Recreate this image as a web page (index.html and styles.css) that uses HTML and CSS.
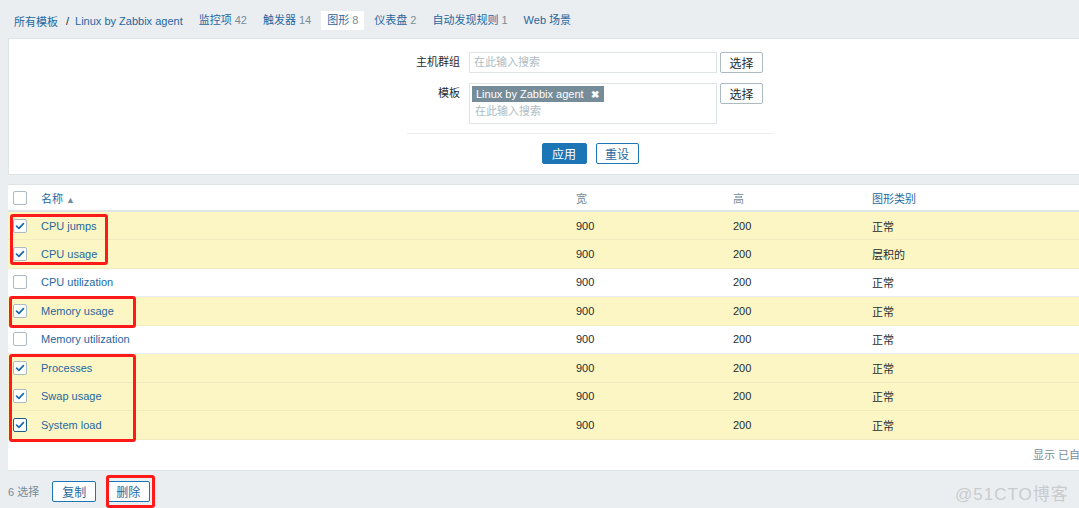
FILE: index.html
```html
<!DOCTYPE html>
<html lang="zh">
<head>
<meta charset="utf-8">
<title>图形</title>
<link rel="stylesheet" href="styles.css">
</head>
<body>
<div class="page">
  <nav class="nav">
    <div class="crumbs"><a class="link">所有模板</a><span class="sep">/</span><a class="link">Linux by Zabbix agent</a></div>
    <ul class="tabs">
      <li class="tab"><a class="link">监控项</a><span class="cnt">42</span></li>
      <li class="tab"><a class="link">触发器</a><span class="cnt">14</span></li>
      <li class="tab active"><a class="link">图形</a><span class="cnt">8</span></li>
      <li class="tab"><a class="link">仪表盘</a><span class="cnt">2</span></li>
      <li class="tab"><a class="link">自动发现规则</a><span class="cnt">1</span></li>
      <li class="tab"><a class="link">Web 场景</a></li>
    </ul>
  </nav>

  <section class="filter">
    <div class="filter-form">
      <div class="fgrid">
        <label class="flabel">主机群组</label>
        <div class="finput"><span class="ph">在此输入搜索</span></div>
        <button class="btn">选择</button>
        <label class="flabel">模板</label>
        <div class="finput multi"><span class="tag">Linux by Zabbix agent<b class="x">✖</b></span><span class="ph">在此输入搜索</span></div>
        <button class="btn">选择</button>
      </div>
      <div class="factions">
        <button class="btn primary">应用</button>
        <button class="btn alt">重设</button>
      </div>
    </div>
  </section>

  <section class="list">
    <table class="tbl">
      <colgroup>
        <col class="c-chk"><col class="c-name"><col class="c-w"><col class="c-h"><col>
      </colgroup>
      <thead>
        <tr>
          <th><span class="cb"></span></th>
          <th><a class="link">名称</a><span class="arrow">▲</span></th>
          <th>宽</th>
          <th>高</th>
          <th><a class="link">图形类别</a></th>
        </tr>
      </thead>
      <tbody>
        <tr class="sel"><td><span class="cb on"><svg viewBox="0 0 14 14"><path d="M3 7.2 L5.8 9.8 L11 4.2"/></svg></span></td><td><a class="link">CPU jumps</a></td><td>900</td><td>200</td><td>正常</td></tr>
        <tr class="sel"><td><span class="cb on"><svg viewBox="0 0 14 14"><path d="M3 7.2 L5.8 9.8 L11 4.2"/></svg></span></td><td><a class="link">CPU usage</a></td><td>900</td><td>200</td><td>层积的</td></tr>
        <tr><td><span class="cb"></span></td><td><a class="link">CPU utilization</a></td><td>900</td><td>200</td><td>正常</td></tr>
        <tr class="sel"><td><span class="cb on"><svg viewBox="0 0 14 14"><path d="M3 7.2 L5.8 9.8 L11 4.2"/></svg></span></td><td><a class="link">Memory usage</a></td><td>900</td><td>200</td><td>正常</td></tr>
        <tr><td><span class="cb"></span></td><td><a class="link">Memory utilization</a></td><td>900</td><td>200</td><td>正常</td></tr>
        <tr class="sel"><td><span class="cb on"><svg viewBox="0 0 14 14"><path d="M3 7.2 L5.8 9.8 L11 4.2"/></svg></span></td><td><a class="link">Processes</a></td><td>900</td><td>200</td><td>正常</td></tr>
        <tr class="sel"><td><span class="cb on"><svg viewBox="0 0 14 14"><path d="M3 7.2 L5.8 9.8 L11 4.2"/></svg></span></td><td><a class="link">Swap usage</a></td><td>900</td><td>200</td><td>正常</td></tr>
        <tr class="sel"><td><span class="cb on focus"><svg viewBox="0 0 14 14"><path d="M3 7.2 L5.8 9.8 L11 4.2"/></svg></span></td><td><a class="link">System load</a></td><td>900</td><td>200</td><td>正常</td></tr>
      </tbody>
    </table>
    <div class="list-foot">显示 已自动发现的 8中的8</div>
  </section>

  <div class="bulk">
    <span class="count">6 选择</span>
    <button class="btn alt">复制</button>
    <button class="btn alt">删除</button>
  </div>

  <div class="mark m1"></div>
  <div class="mark m2"></div>
  <div class="mark m3"></div>
  <div class="mark m4"></div>
  <div class="watermark">@51CTO博客</div>
</div>
</body>
</html>
```

FILE: styles.css
```css
html, body {
  margin: 0;
  padding: 0;
  background: #ebeef0;
  overflow: hidden;
}
body {
  font-family: "Liberation Sans", Arial, "Noto Sans CJK SC", sans-serif;
  font-size: 11px;
  color: #1f2c33;
  width: 1079px;
  height: 508px;
}
.page {
  position: relative;
  width: 1164px;
  padding: 0 0 0 8px;
}
.link {
  color: #1f67a0;
  text-decoration: none;
}

/* nav */
.nav {
  display: flex;
  align-items: center;
  height: 38px;
  padding-top: 3px;
  box-sizing: border-box;
}
.crumbs {
  display: flex;
  align-items: center;
  padding-left: 6px;
}
.sep {
  color: #1f2c33;
  margin: 0 6px 0 8px;
}
.tabs {
  display: flex;
  list-style: none;
  margin: 0 0 0 10px;
  padding: 0;
  gap: 4px;
}
.tab {
  height: 19px;
  line-height: 19px;
  padding: 0 6px;
}
.tab.active {
  background: #fff;
}
.cnt {
  color: #768d99;
  font-size: 11px;
  margin-left: 3px;
}

/* filter */
.filter {
  background: #fff;
  border: 1px solid #dfe4e7;
  height: 137px;
  box-sizing: border-box;
  display: flex;
  justify-content: center;
}
.filter-form {
  width: 366px;
  padding-top: 13px;
}
.fgrid {
  display: grid;
  grid-template-columns: 53px 257px 46px;
  row-gap: 10px;
  padding-bottom: 9px;
  border-bottom: 1px solid #ebeef0;
}
.flabel {
  text-align: right;
  line-height: 21px;
}
.fgrid .finput {
  margin-left: 9px;
}
.fgrid .btn {
  margin-left: 3px;
}
.finput {
  border: 1px solid #dfe4e7;
  height: 21px;
  box-sizing: border-box;
  padding: 0 4px;
  line-height: 19px;
  width: 248px;
}
.finput.multi {
  height: 41px;
  padding: 2px 2px 0 2px;
  line-height: 16px;
}
.finput.multi .ph {
  display: block;
  padding-left: 3px;
  line-height: 19px;
}
.ph {
  color: #aebcc3;
  font-size: 11px;
}
.tag {
  display: inline-block;
  background: #768d99;
  color: #fff;
  height: 16px;
  line-height: 16px;
  padding: 0 5px 0 4px;
  font-size: 11px;
}
.tag .x {
  margin-left: 7px;
  font-size: 10px;
}
.btn {
  font-family: inherit;
  font-size: 12px;
  height: 21px;
  width: 43px;
  padding: 0;
  background: #fff;
  color: #1f2c33;
  border: 1px solid #acbbc2;
  border-radius: 2px;
  box-sizing: border-box;
  cursor: pointer;
}
.btn.primary {
  background: #1c76b5;
  border-color: #1c76b5;
  color: #fff;
  width: 45px;
}
.btn.alt {
  border-color: #1c76b5;
  color: #1f67a0;
}
.factions {
  display: flex;
  justify-content: center;
  gap: 9px;
  padding-top: 9px;
}

/* list */
.list {
  margin-top: 9px;
  background: #fff;
  border: 1px solid #dfe4e7;
  border-left: 0;
}
.tbl {
  border-collapse: collapse;
  width: 100%;
  table-layout: fixed;
}
.c-chk { width: 28px; }
.c-name { width: 535px; }
.c-w { width: 157px; }
.c-h { width: 139px; }
.tbl th {
  height: 25px;
  text-align: left;
  font-weight: normal;
  color: #768d99;
  padding: 0 5px;
  border-bottom: 2px solid #dfe4e7;
  white-space: nowrap;
}
.tbl td {
  height: 28.5px;
  padding: 0 5px;
  border-bottom: 1px solid #ebeef0;
  box-sizing: border-box;
  white-space: nowrap;
}
.tbl tr.sel td {
  background: #fcf6c4;
  border-bottom-color: #f1ecc0;
}
.arrow {
  color: #768d99;
  font-size: 9px;
  margin-left: 3px;
}
.cb {
  display: block;
  width: 14px;
  height: 14px;
  box-sizing: border-box;
  border: 1px solid #acbbc2;
  border-radius: 2px;
  background: #fff;
}
.cb svg {
  display: block;
  width: 12px;
  height: 12px;
}
.cb svg path {
  fill: none;
  stroke: #1b6cab;
  stroke-width: 2;
  stroke-linecap: round;
  stroke-linejoin: round;
}
.cb.focus {
  border-color: #1f5c8e;
}
.list-foot {
  height: 30px;
  line-height: 30px;
  padding-left: 1025px;
  color: #768d99;
  white-space: nowrap;
}

/* bulk */
.bulk {
  display: flex;
  align-items: center;
  gap: 10px;
  padding-top: 10px;
}
.count {
  color: #768d99;
  margin-right: 3px;
}
.bulk .btn {
  width: 44px;
  height: 21px;
}

/* annotations */
.mark {
  position: absolute;
  border: 3px solid #ff1a1a;
  border-radius: 3px;
  box-sizing: border-box;
}
.m1 { left: 10px; top: 214px; width: 98px; height: 51px; }
.m2 { left: 9px; top: 296px; width: 127px; height: 32px; }
.m3 { left: 9px; top: 354px; width: 127px; height: 88px; }
.m4 { left: 106px; top: 475px; width: 49px; height: 33px; }
.watermark {
  position: absolute;
  left: 955px;
  top: 480px;
  font-size: 17px;
  letter-spacing: 1px;
  color: #c9ccce;
  white-space: nowrap;
}
```
